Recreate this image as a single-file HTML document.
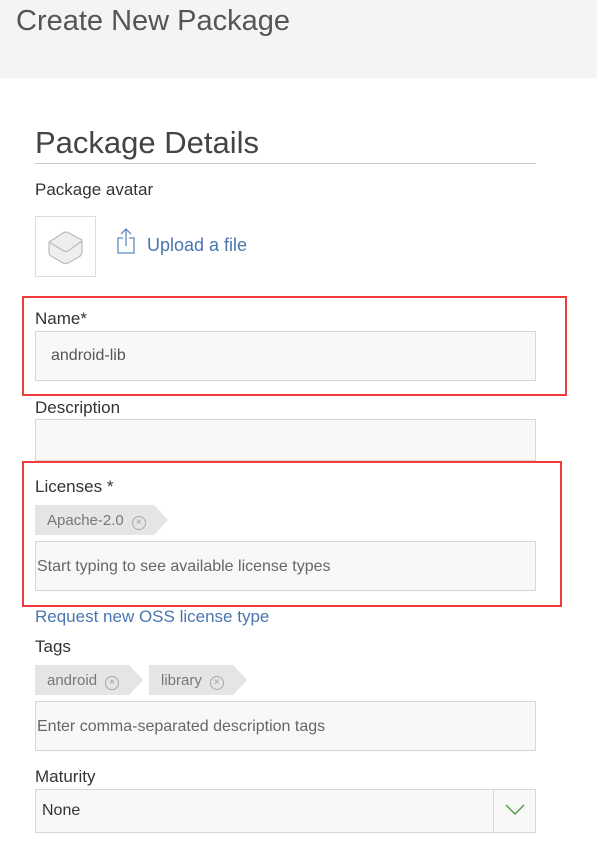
<!DOCTYPE html><html><head><style>
body{margin:0;width:597px;height:848px;background:#fff;font-family:"Liberation Sans",sans-serif;position:relative;overflow:hidden;color:#333}
.a{position:absolute}
.hdr{left:0;top:0;width:597px;height:78px;background:#f4f4f4}
.lbl{font-size:17px;color:#333}
.inp{background:#f8f8f8;border:1px solid #d6d6d6;box-sizing:border-box;left:35px;width:501px;font-size:16px;color:#555}
.tag{height:30px;background:#e5e5e5;color:#777;font-size:15px;line-height:31px;padding-left:12px;box-sizing:border-box;clip-path:polygon(0 0,calc(100% - 14px) 0,100% 50%,calc(100% - 14px) 100%,0 100%)}
.x{display:inline-block;width:12px;height:12px;border:1px solid #aaa;border-radius:50%;font-size:10px;line-height:11px;text-align:center;margin-left:8px;vertical-align:0px;color:#999}
.red{border:2px solid #f03c3c;box-sizing:border-box}
</style></head><body>
<div class="a hdr"></div>
<div class="a" style="left:16px;top:5px;font-size:29px;color:#555">Create New Package</div>
<div class="a" style="left:35px;top:125px;font-size:31px;color:#444">Package Details</div>
<div class="a" style="left:35px;top:163px;width:501px;height:1px;background:#ccc"></div>
<div class="a lbl" style="left:35px;top:180px">Package avatar</div>
<div class="a" style="left:35px;top:216px;width:61px;height:61px;border:1px solid #ddd;box-sizing:border-box">
<svg width="61" height="61" viewBox="0 0 61 61" style="position:absolute;left:-1px;top:-1px"><path d="M14 26 L28 17 Q31 15 34 17 L47 24 L47 36 Q47 39 44 41 L33 47 Q30 48 28 47 L16 40 Q14 39 14 36 Z" fill="#eee" stroke="#bbb" stroke-width="1.2"/><path d="M14 26 L29 35 Q31 36 33 35 L47 25" fill="none" stroke="#bbb" stroke-width="1.2"/></svg></div>
<svg class="a" style="left:116px;top:227px" width="20" height="28" viewBox="0 0 20 28"><path d="M10 2 V19 M5 7 L10 2 L15 7 M7 11 H2 V26 H18 V11 H13" fill="none" stroke="#5b8ac4" stroke-width="1.3"/></svg>
<div class="a" style="left:147px;top:235px;font-size:18px;color:#4a76b0">Upload a file</div>
<div class="a lbl" style="left:35px;top:309px">Name*</div>
<div class="a inp" style="top:331px;height:50px;padding:15px 15px">android-lib</div>
<div class="a red" style="left:22px;top:296px;width:545px;height:100px"></div>
<div class="a lbl" style="left:35px;top:398px">Description</div>
<div class="a inp" style="top:419px;height:42px"></div>
<div class="a lbl" style="left:35px;top:477px">Licenses *</div>
<div class="a tag" style="left:35px;top:505px;width:133px">Apache-2.0<span class="x">×</span></div>
<div class="a inp" style="top:541px;height:50px;padding:16px 0 0 1px;color:#666">Start typing to see available license types</div>
<div class="a red" style="left:22px;top:461px;width:540px;height:146px"></div>
<div class="a" style="left:35px;top:607px;font-size:17px;color:#4a76b0">Request new OSS license type</div>
<div class="a lbl" style="left:35px;top:637px">Tags</div>
<div class="a tag" style="left:35px;top:665px;width:108px">android<span class="x">×</span></div>
<div class="a tag" style="left:149px;top:665px;width:98px">library<span class="x">×</span></div>
<div class="a inp" style="top:701px;height:50px;padding:16px 0 0 1px;color:#666">Enter comma-separated description tags</div>
<div class="a lbl" style="left:35px;top:767px">Maturity</div>
<div class="a inp" style="top:789px;height:44px;padding:12px 6px;color:#333">None</div>
<div class="a" style="left:493px;top:790px;width:1px;height:42px;background:#d6d6d6"></div>
<svg class="a" style="left:503px;top:801px" width="24" height="18"><path d="M3 4 L12 13 L21 4" fill="none" stroke="#5a9a4a" stroke-width="1.5"/></svg>
</body></html>
